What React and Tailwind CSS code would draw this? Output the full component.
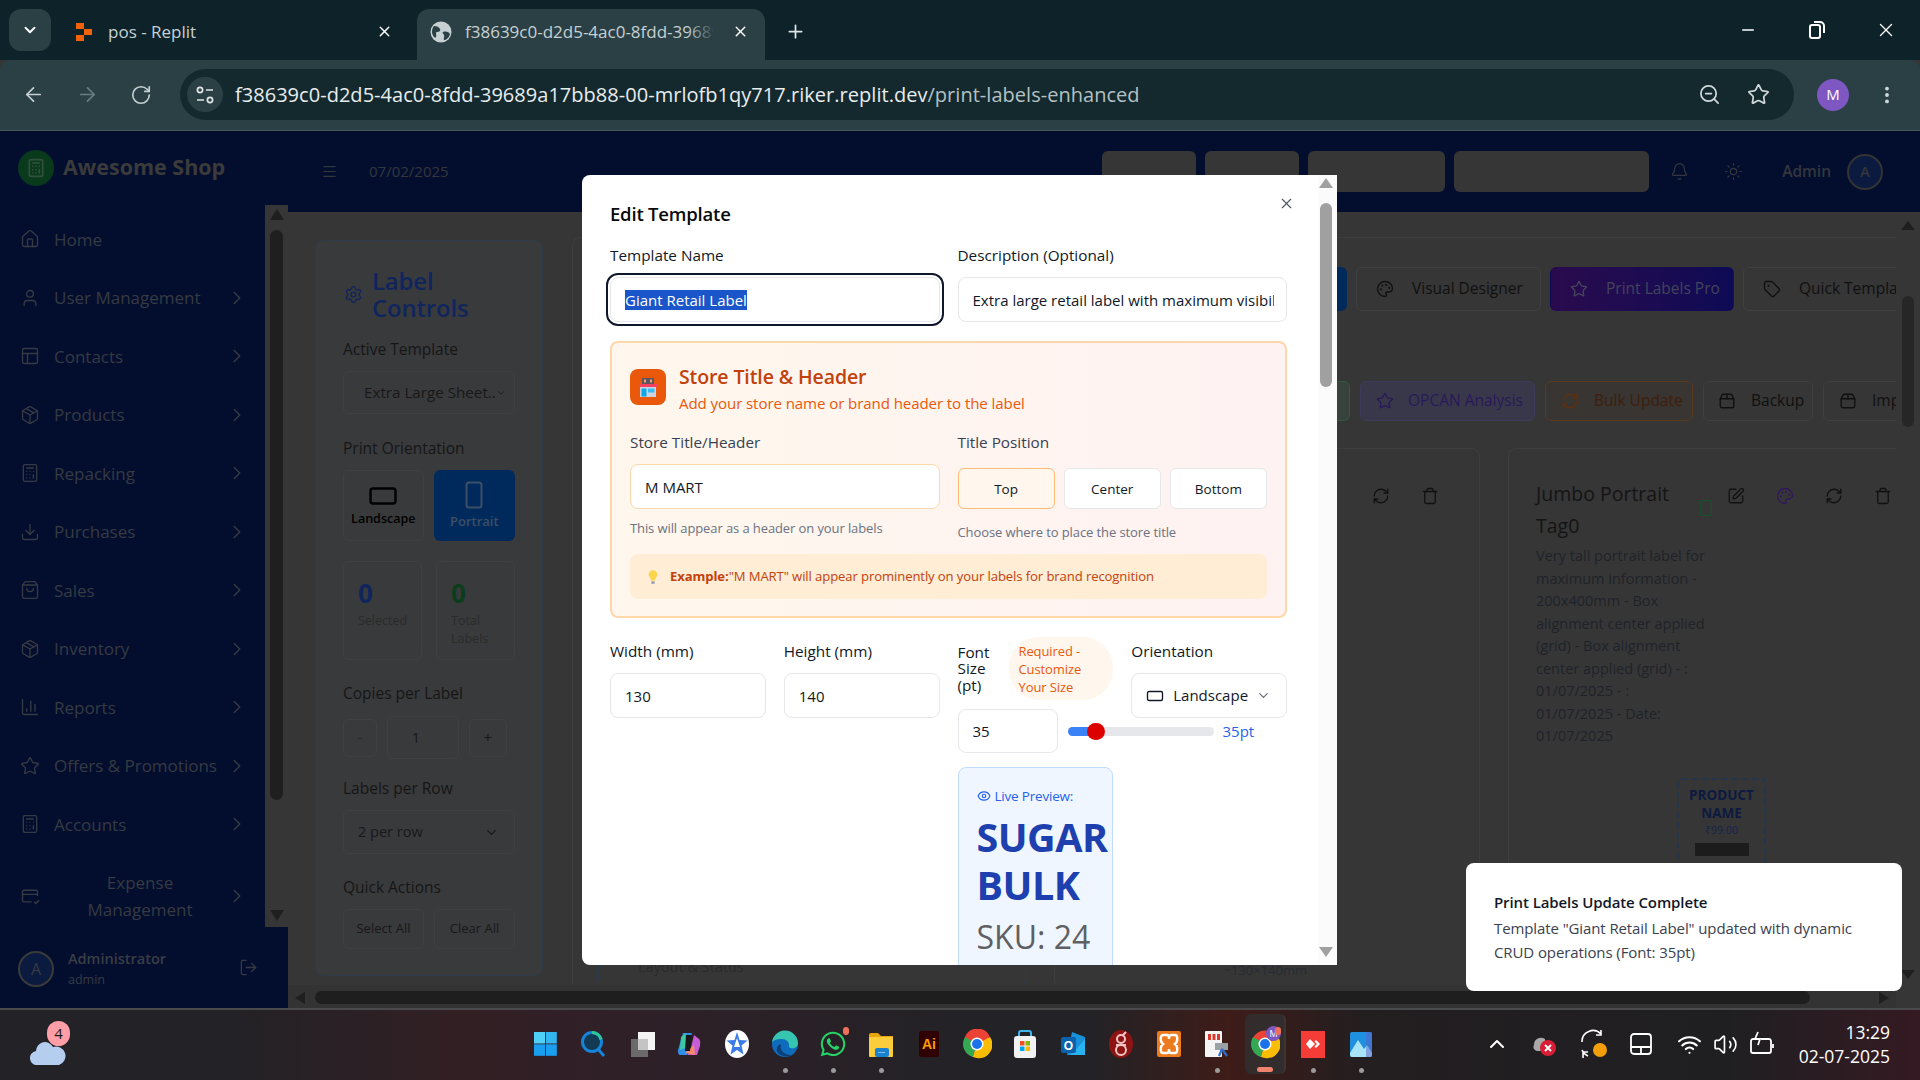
import React from 'react';
import {
  Home, User, PanelsTopLeft, Package, Calculator, Download, ShoppingBag, BarChart3, Star, ChevronRight, ChevronDown,
  LogOut, Settings, RectangleHorizontal, RectangleVertical, Palette, Tag, RefreshCw, Package2, Trash, SquarePen, Smartphone, Eye,
  Bell, Sun, Menu, X, Plus, ArrowLeft, ArrowRight, RotateCw, EllipsisVertical, ZoomOut, Minus, ChevronUp, Wifi, Volume2
} from 'lucide-react';
import { FaWhatsapp } from 'react-icons/fa';

function TabStrip() {
  return (
    <div className="h-[60px] bg-[#0d2329] flex items-end shrink-0 text-[#c6d0d2]">
      <div className="w-[42px] h-[42px] ml-[9px] mb-[9px] rounded-[12px] bg-[#2a4045] flex items-center justify-center">
        <ChevronDown size={18} strokeWidth={2.5} className="text-white" />
      </div>
      <div className="w-[366px] h-[51px] flex items-center pl-[25px] pr-[24px] pb-[6px]">
        <svg width="17" height="18" viewBox="0 0 17 18"><rect x="0" y="0" width="8" height="6" fill="#f26207" /><rect x="8" y="6" width="8" height="6" fill="#f26207" /><rect x="0" y="12" width="8" height="6" fill="#f26207" /></svg>
        <span className="ml-[15px] text-[17px]">pos - Replit</span>
        <X size={17} className="ml-auto text-white" />
      </div>
      <div className="w-[348px] h-[51px] bg-[#2a4045] rounded-t-[12px] flex items-center pl-[13px] pr-[16px] pb-[6px] relative">
        <svg width="22" height="22" viewBox="0 0 22 22" className="shrink-0"><circle cx="11" cy="11" r="10.5" fill="#c6d0d2" /><path d="M4 5c3 0 5 1 6 3s-1 3-3 3 0 3-1 5-4-2-4-5 1-5 2-6zM13 11c3-1 6 0 7 2-1 4-4 6-6 6-1-2 1-3 0-5s-2-2-1-3z" fill="#2a4045" /></svg>
        <span className="ml-[13px] text-[17px] w-[248px] overflow-hidden whitespace-nowrap">f38639c0-d2d5-4ac0-8fdd-39689a17bb88-00</span>
        <div className="absolute left-[270px] top-0 w-[28px] h-[45px] bg-gradient-to-r from-transparent to-[#2a4045]" />
        <X size={17} className="ml-auto text-white shrink-0 relative" />
      </div>
      <div className="w-[60px] h-[51px] flex items-center justify-center pb-[6px]"><Plus size={21} className="text-[#dfe5e6]" /></div>
      <div className="flex-1 h-full flex items-center justify-end text-white">
        <div className="w-[69px] flex justify-center"><Minus size={18} strokeWidth={2} /></div>
        <div className="w-[69px] flex justify-center">
          <svg width="16" height="18" viewBox="0 0 16 18" fill="none" stroke="white" strokeWidth="2"><rect x="1" y="4" width="10" height="13" rx="2" /><path d="M5 1h6a4 4 0 0 1 4 4v7" /></svg>
        </div>
        <div className="w-[69px] mr-0 flex justify-center"><X size={22} strokeWidth={1.5} /></div>
      </div>
    </div>
  );
}

function Toolbar() {
  return (
    <div className="h-[71px] bg-[#2a4045] rounded-t-[10px] border-b border-[#46595d] flex items-center shrink-0 text-[#c6d0d2] pb-[1px]">
      <div className="w-[54px] ml-[6px] flex justify-center"><ArrowLeft size={23} strokeWidth={1.8} /></div>
      <div className="w-[54px] flex justify-center text-[#6b7c80]"><ArrowRight size={23} strokeWidth={1.8} /></div>
      <div className="w-[54px] flex justify-center"><RotateCw size={22} strokeWidth={1.8} /></div>
      <div className="ml-[12px] w-[1614px] h-[51px] rounded-full bg-[#13292e] flex items-center pl-[7px] pr-[24px]">
        <div className="w-[36px] h-[35px] rounded-full bg-[#2a4045] flex items-center justify-center">
          <svg width="20" height="20" viewBox="0 0 20 20" fill="none" stroke="#dfe5e6" strokeWidth="1.7"><circle cx="5" cy="5" r="2.6" /><path d="M11 5h7M2 15h7" /><circle cx="15" cy="15" r="2.6" /></svg>
        </div>
        <span className="ml-[12px] text-[20px] tracking-[0.03px] text-[#e8eced] whitespace-nowrap">f38639c0-d2d5-4ac0-8fdd-39689a17bb88-00-mrlofb1qy717.riker.replit.dev<span className="text-[#b4c0c3]">/print-labels-enhanced</span></span>
        <ZoomOut size={23} strokeWidth={1.8} className="ml-auto text-[#d0d8da]" />
        <Star size={23} strokeWidth={1.8} className="ml-[26px] text-[#d0d8da]" />
      </div>
      <div className="ml-[23px] w-[32px] h-[32px] rounded-full bg-[#7e57c2] text-white text-[15px] flex items-center justify-center">M</div>
      <div className="ml-[27px] flex"><EllipsisVertical size={22} strokeWidth={2.2} className="text-[#d0d8da]" /></div>
    </div>
  );
}

const navItems = [
  [Home, 'Home', false],
  [User, 'User Management', true],
  [PanelsTopLeft, 'Contacts', true],
  [Package, 'Products', true],
  [Calculator, 'Repacking', true],
  [Download, 'Purchases', true],
  [ShoppingBag, 'Sales', true],
  [Package, 'Inventory', true],
  [BarChart3, 'Reports', true],
  [Star, 'Offers & Promotions', true],
  [Calculator, 'Accounts', true],
];

function Sidebar() {
  return (
    <aside className="w-[288px] h-full bg-[#030e2e] flex flex-col shrink-0 text-[#363a42]">
      <div className="h-[74px] flex items-center pl-[18px] pb-[1px] shrink-0">
        <div className="w-[36px] h-[36px] rounded-full bg-[#0a3a1c] flex items-center justify-center">
          <Calculator size={20} className="text-[#33503f]" />
        </div>
        <span className="ml-[9px] text-[21.5px] font-bold text-[#3b3b3b] whitespace-nowrap">Awesome Shop</span>
      </div>
      <div className="flex-1 flex min-h-0">
        <nav className="w-[265px] pt-[5px] overflow-hidden">
          {navItems.map(([Icon, label, chev]) => (
            <div key={label} className="h-[58.5px] flex items-center pl-[20px] pr-[17px]">
              <Icon size={20} strokeWidth={1.6} className="shrink-0" />
              <span className="ml-[14px] text-[17px] whitespace-nowrap">{label}</span>
              {chev && <ChevronRight size={22} strokeWidth={1.6} className="ml-auto shrink-0" />}
            </div>
          ))}
          <div className="h-[84px] flex items-center pl-[20px] pr-[17px]">
            <svg width="20" height="20" viewBox="0 0 24 24" fill="none" stroke="currentColor" strokeWidth="1.7" className="shrink-0"><path d="M21 12V7a2 2 0 0 0-2-2H5a2 2 0 0 0-2 2v10a2 2 0 0 0 2 2h9M3 10h18M17 19l2 2 4-4" /></svg>
            <span className="ml-[14px] flex-1 text-center text-[17px] leading-[27px]">Expense<br />Management</span>
            <ChevronRight size={22} strokeWidth={1.6} className="shrink-0" />
          </div>
        </nav>
        <div className="w-[23px] bg-[#363636] flex flex-col items-center shrink-0">
          <div className="mt-[4px] w-0 h-0 border-x-[7px] border-x-transparent border-b-[11px] border-b-[#1f1f1f]" />
          <div className="w-[13px] h-[570px] mt-[10px] rounded-full bg-[#1f1f1f]" />
          <div className="w-0 h-0 mt-auto mb-[6px] border-x-[7px] border-x-transparent border-t-[11px] border-t-[#1f1f1f]" />
        </div>
      </div>
      <div className="h-[81px] flex items-center pl-[18px] shrink-0">
        <div className="w-[36px] h-[36px] mt-[2px] rounded-full border-2 border-[#3a3a3a] bg-[#0a1b3f] flex items-center justify-center text-[16px]">A</div>
        <div className="ml-[14px] mt-[3px]">
          <div className="text-[14.5px] font-semibold text-[#3a3d44] leading-[20px]">Administrator</div>
          <div className="text-[12.5px] leading-[20px] mt-[1px]">admin</div>
        </div>
        <LogOut size={19} strokeWidth={1.6} className="ml-auto mr-[30px]" />
      </div>
    </aside>
  );
}

function Header() {
  return (
    <header className="h-[81px] bg-[#030e2e] flex items-center shrink-0 text-[#33363d]">
      <Menu size={17} strokeWidth={1.7} className="ml-[33px]" />
      <span className="ml-[31px] text-[15px]">07/02/2025</span>
      <div className="ml-auto flex items-center gap-[9px]">
        <div className="w-[94px] h-[41px] rounded-md bg-[#363636]" />
        <div className="w-[94px] h-[41px] rounded-md bg-[#363636]" />
        <div className="w-[137px] h-[41px] rounded-md bg-[#363636]" />
        <div className="w-[195px] h-[41px] rounded-md bg-[#363636]" />
      </div>
      <Bell size={19} strokeWidth={1.5} className="ml-[21px]" />
      <Sun size={19} strokeWidth={1.5} className="ml-[35px]" />
      <span className="ml-[39px] text-[15.5px] font-semibold">Admin</span>
      <div className="ml-[16px] mr-[37px] w-[36px] h-[36px] rounded-full border-2 border-[#333] bg-[#0a1b3f] flex items-center justify-center text-[15px] font-semibold">A</div>
    </header>
  );
}

function Outline({ className, children }) {
  return <div className={`border border-[#404040] rounded-md flex items-center justify-center ${className}`}>{children}</div>;
}

function LabelControls() {
  const head = 'text-[15.5px] font-medium leading-[20px] text-[#161616]';
  return (
    <div className="w-[228px] h-[736px] shrink-0 rounded-lg border border-[#2f3b4a] bg-[#393a3c] pl-[27px] pr-[27px] text-[#181818]">
      <div className="flex items-center mt-[26px]">
        <Settings size={19} strokeWidth={1.7} className="text-[#10255c] shrink-0 ml-[1px]" />
        <div className="ml-[9px] text-[24px] font-semibold leading-[27px] text-[#10255c] tracking-[-0.2px]">Label<br />Controls</div>
      </div>
      <div className={`mt-[18px] ${head}`}>Active Template</div>
      <Outline className="mt-[12px] h-[43px] w-[172px] justify-start pl-[20px] pr-[14px]">
        <span className="text-[15.2px] whitespace-nowrap">Extra Large Sheet..</span>
        <ChevronDown size={10} className="ml-auto shrink-0" />
      </Outline>
      <div className={`mt-[24px] ${head}`}>Print Orientation</div>
      <div className="mt-[12px] flex gap-[10px]">
        <Outline className="w-[81px] h-[71px] flex-col">
          <RectangleHorizontal size={30} strokeWidth={1.9} className="text-black" />
          <span className="text-[12.5px] font-semibold text-black -mt-[1px] mb-[2px]">Landscape</span>
        </Outline>
        <div className="w-[82px] h-[71px] rounded-md bg-[#002a5c] flex flex-col items-center justify-center text-[#3d4f66]">
          <RectangleVertical size={30} strokeWidth={1.6} />
          <span className="text-[13px] font-semibold mt-[2px]">Portrait</span>
        </div>
      </div>
      <div className="mt-[20px] flex gap-[14px]">
        <Outline className="w-[79px] h-[99px] flex-col !items-start !justify-start pl-[14px] pt-[15px]">
          <div className="text-[26px] font-bold leading-[32px] text-[#10255c]">0</div>
          <div className="text-[12.5px] leading-[18px] text-[#2a2a2a] mt-[3px]">Selected</div>
        </Outline>
        <Outline className="w-[79px] h-[99px] flex-col !items-start !justify-start pl-[14px] pt-[15px]">
          <div className="text-[26px] font-bold leading-[32px] text-[#0c3d1a]">0</div>
          <div className="text-[12.5px] leading-[18px] text-[#2a2a2a] mt-[3px]">Total<br />Labels</div>
        </Outline>
      </div>
      <div className={`mt-[23px] ${head}`}>Copies per Label</div>
      <div className="mt-[13px] flex items-center gap-[10px]">
        <Outline className="w-[34px] h-[38px] text-[14px] text-[#2a2a2a]">-</Outline>
        <Outline className="w-[72px] h-[43px] text-[14.5px] pr-[14px]">1</Outline>
        <Outline className="w-[38px] h-[38px] text-[14.5px]">+</Outline>
      </div>
      <div className={`mt-[19px] ${head}`}>Labels per Row</div>
      <Outline className="mt-[12px] h-[44px] w-[172px] justify-start pl-[14px] pr-[15px]">
        <span className="text-[14.5px]">2 per row</span>
        <ChevronDown size={15} className="ml-auto" />
      </Outline>
      <div className={`mt-[23px] ${head}`}>Quick Actions</div>
      <div className="mt-[12px] flex gap-[10px]">
        <Outline className="w-[81px] h-[40px] text-[13px] font-medium">Select All</Outline>
        <Outline className="w-[81px] h-[40px] text-[13px] font-medium">Clear All</Outline>
      </div>
    </div>
  );
}

function Tool({ icon: Icon, className = '', w, text, tc = 'text-[#101010]', ic = 'text-[#101010]', gap = 'ml-[18px]', pl = 'pl-[19px]' }) {
  return (
    <div className={`flex items-center shrink-0 border rounded-md whitespace-nowrap overflow-hidden ${w} ${pl} ${className}`}>
      <Icon size={18} strokeWidth={1.8} className={`shrink-0 ${ic}`} />
      <span className={`${gap} text-[15.5px] font-medium ${tc}`}>{text}</span>
    </div>
  );
}

function MainContent() {
  return (
    <div className="flex-1 min-h-0 flex bg-[#363636]">
      <div className="flex-1 min-w-0 overflow-hidden flex flex-col">
        <div className="flex-1 min-h-0 overflow-hidden flex pt-[28px] pl-[27px]">
          <LabelControls />
          <div className="ml-[29px] mt-[-3px] flex-1 min-w-0 border-l border-t border-[#3e3e3e] rounded-tl-lg pl-[25px] pt-[29px] overflow-hidden">
            <div className="flex gap-[9px] h-[44px] overflow-hidden">
              <div className="w-[749px] shrink-0 bg-[#002a5c] rounded-md" />
              <Tool icon={Palette} w="w-[185px]" className="border-[#404040]" text="Visual Designer" />
              <Tool icon={Star} w="w-[184px]" pl="pl-[19px]" className="border-transparent bg-gradient-to-r from-[#2a0a4e] to-[#0d0a55]" text="Print Labels Pro" tc="text-[#43435a]" ic="text-[#45455a]" />
              <Tool icon={Tag} w="w-[220px]" className="border-[#404040]" text="Quick Templates" />
            </div>
            <div className="flex gap-[10px] h-[40px] mt-[70px] overflow-hidden">
              <div className="w-[752px] shrink-0 border border-[#2f5a3c] bg-[#38423c] rounded-md" />
              <Tool icon={Star} w="w-[175px]" pl="pl-[15px]" gap="ml-[14px]" className="border-[#3e3a5c] bg-[#39384a]" text="OPCAN Analysis" tc="text-[#28185a]" ic="text-[#28185a]" />
              <Tool icon={RefreshCw} w="w-[148px]" pl="pl-[15px]" gap="ml-[15px]" className="border-[#5a3a1c] bg-[#383532]" text="Bulk Update" tc="text-[#3f1f0c]" ic="text-[#5f2f10]" />
              <Tool icon={Package2} w="w-[110px]" pl="pl-[14px]" gap="ml-[15px]" className="border-[#404040]" text="Backup" />
              <Tool icon={Package2} w="w-[130px]" pl="pl-[15px]" gap="ml-[15px]" className="border-[#404040]" text="Import" />
            </div>
            <div className="flex gap-[28px] mt-[27px]">
              <div className="w-[428px] h-[540px] shrink-0 border border-[#2b3a4d] rounded-lg flex flex-col justify-end pl-[39px] pb-[9px] text-[#2b2b2b]">
                <div className="text-[14.5px]">Layout &amp; Status</div>
              </div>
              <div className="w-[426px] h-[540px] shrink-0 border border-[#3e3e3e] rounded-lg relative">
                <div className="flex justify-end gap-[31px] pr-[40px] pt-[38px] text-[#111]">
                  <RefreshCw size={18} strokeWidth={1.7} />
                  <Trash size={18} strokeWidth={1.7} />
                </div>
                <div className="absolute right-[172px] bottom-[7px] text-[13px] text-[#272b33]">~130×140mm</div>
              </div>
              <div className="w-[420px] h-[540px] shrink-0 border-l border-t border-[#3e3e3e] rounded-tl-lg pl-[27px] pr-[5px] pt-[29px]">
                <div className="flex">
                  <div className="w-[170px] text-[19.5px] font-medium leading-[32px] text-[#141414]">Jumbo Portrait Tag0</div>
                  <Smartphone size={18} strokeWidth={1.5} className="mt-[21px] text-[#14532d] ml-[-9px] shrink-0" />
                  <div className="flex gap-[31px] ml-[12px] pt-[9px] shrink-0">
                    <SquarePen size={18} strokeWidth={1.7} className="text-[#111]" />
                    <Palette size={18} strokeWidth={1.7} className="text-[#31175e]" />
                    <RefreshCw size={18} strokeWidth={1.7} className="text-[#111]" />
                    <Trash size={18} strokeWidth={1.7} className="text-[#111]" />
                  </div>
                </div>
                <div className="mt-[3px] text-[14.5px] leading-[22.5px] text-[#1f2329] whitespace-nowrap">
                  Very tall portrait label for<br />maximum information -<br />200x400mm - Box<br />alignment center applied<br />(grid) - Box alignment<br />center applied (grid) - :<br />01/07/2025 - :<br />01/07/2025 - Date:<br />01/07/2025
                </div>
                <div className="ml-[141px] mt-[30px] w-[89px] h-[100px] border-2 border-dashed border-[#24364f] rounded text-center pt-[6px]">
                  <div className="text-[13.5px] font-bold leading-[18px] text-[#0d1a40]">PRODUCT<br />NAME</div>
                  <div className="text-[10.5px] leading-[16px] text-[#14254d]">₹99.00</div>
                  <div className="mx-auto mt-[5px] w-[54px] h-[13px] bg-[#1c1c1c]" />
                </div>
              </div>
            </div>
          </div>
        </div>
        <div className="h-[23px] shrink-0 bg-[#333333] flex items-start pt-[6px]">
          <div className="ml-[7px] mt-[1px] w-0 h-0 border-y-[6px] border-y-transparent border-r-[10px] border-r-[#1f1f1f]" />
          <div className="ml-[10px] w-[1495px] h-[13px] rounded-full bg-[#1e1e1e]" />
          <div className="ml-[69px] mt-[1px] w-0 h-0 border-y-[6px] border-y-transparent border-l-[10px] border-l-[#1f1f1f]" />
        </div>
      </div>
      <div className="w-[24px] shrink-0 flex flex-col items-center">
        <div className="mt-[9px] w-0 h-0 border-x-[7px] border-x-transparent border-b-[9px] border-b-[#1f1f1f]" />
        <div className="mt-[66px] w-[12px] h-[131px] rounded-full bg-[#262626]" />
        <div className="mt-auto mb-[29px] w-0 h-0 border-x-[7px] border-x-transparent border-t-[9px] border-t-[#1f1f1f]" />
      </div>
    </div>
  );
}

const inputCls = 'w-full rounded-lg border border-[#e5e7eb] bg-white pl-[14px] pr-[12px] text-[15px] text-[#111827] outline-none';
const fieldLabel = 'text-[15.3px] font-medium leading-[20px] text-[#111827]';

function Modal() {
  return (
    <div className="absolute left-[582px] top-[175px] w-[755px] h-[790px] bg-white rounded-l-lg flex overflow-hidden font-['Open_Sans','Noto_Sans',sans-serif]">
      <div className="w-[736px] pl-[28px] pr-[31px] pt-[27px] overflow-hidden shrink-0 relative">
        <X size={17} strokeWidth={1.6} className="absolute left-[696px] top-[20px] text-[#4b5563]" />
        <h2 className="text-[18.5px] font-semibold leading-[24px] text-[#0a0a0a] tracking-[-0.2px]">Edit Template</h2>
        <div className="mt-[19px] grid grid-cols-2 gap-[18px]">
          <div>
            <div className={fieldLabel}>Template Name</div>
            <div className="mt-[12px] h-[45px] rounded-lg border border-[#e5e7eb] bg-white flex items-center pl-[14px] text-[15px] text-[#111827] outline-2 outline-offset-2 outline-[#0f172a]">
              <span className="bg-[#1a56c9] text-white leading-[20px]">Giant Retail Label</span>
            </div>
          </div>
          <div>
            <div className={fieldLabel}>Description (Optional)</div>
            <input readOnly value="Extra large retail label with maximum visibility" className={`mt-[12px] h-[45px] ${inputCls}`} />
          </div>
        </div>
        <section className="mt-[19px] h-[277px] rounded-lg border-2 border-[#fed7aa] bg-gradient-to-r from-[#fff7ed] to-[#fef2f2] pl-[18px] pr-[18px]">
          <div className="pt-[22px] flex items-start">
            <div className="w-[36px] h-[36px] mt-[4px] rounded-lg bg-[#ea580c] flex items-center justify-center shrink-0">
              <svg width="22" height="22" viewBox="0 0 22 22"><rect x="5" y="2" width="12" height="6" fill="#5b5560" /><rect x="7" y="3.5" width="2" height="3" fill="#f3a07a" /><rect x="13" y="3.5" width="2" height="3" fill="#f3a07a" /><rect x="2" y="8" width="18" height="3" fill="#f43f5e" /><rect x="3" y="11" width="16" height="10" fill="#cbd5e1" /><rect x="4.5" y="12.5" width="5" height="8" fill="#0ea5e9" /><rect x="11" y="12.5" width="6.5" height="4" fill="#38bdf8" /></svg>
            </div>
            <div className="ml-[13px]">
              <div className="text-[19.5px] font-semibold leading-[24px] text-[#c2410c] tracking-[-0.1px]">Store Title &amp; Header</div>
              <div className="mt-[4px] text-[15.1px] leading-[20px] text-[#ea580c] tracking-[-0.1px]">Add your store name or brand header to the label</div>
            </div>
          </div>
          <div className="mt-[19px] grid grid-cols-2 gap-[18px]">
            <div>
              <div className="text-[15.3px] font-medium leading-[20px] text-[#374151]">Store Title/Header</div>
              <input readOnly value="M MART" className="mt-[12px] h-[45px] w-full rounded-lg border border-[#fed7aa] bg-white pl-[14px] text-[15px] text-[#111827] outline-none" />
              <div className="mt-[11px] text-[13px] leading-[16px] text-[#6b7280] tracking-[-0.1px]">This will appear as a header on your labels</div>
            </div>
            <div>
              <div className="text-[15.3px] font-medium leading-[20px] text-[#374151]">Title Position</div>
              <div className="mt-[16px] grid grid-cols-3 gap-[9px]">
                <div className="h-[41px] rounded-md border border-[#fdba74] bg-[#fff7ed] flex items-center justify-center pt-[2px] text-[13.5px] font-medium text-[#111827]">Top</div>
                <div className="h-[41px] rounded-md border border-[#e5e7eb] bg-white flex items-center justify-center pt-[2px] text-[13.5px] font-medium text-[#111827]">Center</div>
                <div className="h-[41px] rounded-md border border-[#e5e7eb] bg-white flex items-center justify-center pt-[2px] text-[13.5px] font-medium text-[#111827]">Bottom</div>
              </div>
              <div className="mt-[15px] text-[13px] leading-[16px] text-[#6b7280] tracking-[-0.1px]">Choose where to place the store title</div>
            </div>
          </div>
          <div className="mt-[14px] h-[45px] rounded-lg bg-[#ffedd5] flex items-center pl-[17px] pt-[1px]">
            <svg width="12" height="16" viewBox="0 0 14 18"><path d="M7 1a5 5 0 0 1 3 9l-.6 3H4.6L4 10a5 5 0 0 1 3-9z" fill="#fcd34d" /><rect x="5" y="14" width="4" height="3" fill="#9ca3af" /></svg>
            <span className="ml-[11px] text-[13.1px] text-[#c2410c] tracking-[-0.1px]"><b className="font-bold">Example:</b>"M MART" will appear prominently on your labels for brand recognition</span>
          </div>
        </section>
        <div className="mt-[19px] grid grid-cols-4 gap-[18px] items-start">
          <div className="pt-[4px]">
            <div className={fieldLabel}>Width (mm)</div>
            <input readOnly value="130" className={`mt-[12px] h-[45px] ${inputCls}`} />
          </div>
          <div className="pt-[4px]">
            <div className={fieldLabel}>Height (mm)</div>
            <input readOnly value="140" className={`mt-[12px] h-[45px] ${inputCls}`} />
          </div>
          <div>
            <div className="flex items-center h-[63px]">
              <div className="w-[51px] text-[15.3px] font-medium leading-[16.5px] text-[#111827]">Font Size (pt)</div>
              <div className="w-[104px] h-[63px] shrink-0 rounded-[30px] bg-[#fff7ed] pl-[10px] text-[13px] leading-[18px] text-[#ea580c] flex items-center tracking-[-0.1px]"><span>Required -<br />Customize<br />Your Size</span></div>
            </div>
            <div className="mt-[9px] flex items-center w-[329px]">
              <input readOnly value="35" className="h-[44px] w-[100px] rounded-lg border border-[#e5e7eb] bg-white pl-[14px] text-[15px] text-[#111827] outline-none" />
              <div className="ml-[10px] w-[146px] h-[9px] rounded-full bg-[#e5e7eb] relative">
                <div className="h-full w-[24px] rounded-l-full bg-[#3b82f6]" />
                <div className="absolute left-[19px] top-[-4px] w-[18px] h-[17px] rounded-full bg-[#dc0000]" />
              </div>
              <span className="ml-[9px] text-[15px] font-medium text-[#2563eb]">35pt</span>
            </div>
            <div className="mt-[14px] w-[155px] h-[300px] rounded-lg border border-[#bfdbfe] bg-[#eff6ff] pl-[18px] pt-[19px]">
              <div className="flex items-center text-[#2563eb]">
                <Eye size={14} strokeWidth={2} />
                <span className="ml-[4px] text-[13.5px] font-medium leading-[18px] tracking-[-0.2px]">Live Preview:</span>
              </div>
              <div className="mt-[8px] text-[39.5px] font-bold leading-[48px] text-[#1e40af] tracking-[-0.5px]">SUGAR BULK</div>
              <div className="mt-[5px] text-[32px] leading-[46px] text-[#5f6063] whitespace-nowrap">SKU: 24</div>
            </div>
          </div>
          <div className="pt-[4px]">
            <div className={fieldLabel}>Orientation</div>
            <div className="mt-[12px] h-[45px] rounded-lg border border-[#e5e7eb] bg-white flex items-center pl-[14px] pr-[15px] text-[15px] text-[#111827]">
              <RectangleHorizontal size={18} strokeWidth={1.8} />
              <span className="ml-[9px]">Landscape</span>
              <ChevronDown size={15} className="ml-auto text-[#6b7280]" />
            </div>
          </div>
        </div>
      </div>
      <div className="flex-1 bg-[#fbfbfb] flex flex-col items-center pr-[4px]">
        <div className="mt-[3px] w-0 h-0 border-x-[7px] border-x-transparent border-b-[10px] border-b-[#a0a0a0]" />
        <div className="mt-[15px] w-[12px] h-[184px] rounded-full bg-[#a0a0a0]" />
        <div className="mt-auto mb-[8px] w-0 h-0 border-x-[7px] border-x-transparent border-t-[10px] border-t-[#a0a0a0]" />
      </div>
    </div>
  );
}

function Toast() {
  return (
    <div className="absolute left-[1466px] top-[863px] w-[436px] h-[128px] bg-white rounded-lg pl-[28px] pr-[20px] pt-[28px] font-['Open_Sans','Noto_Sans',sans-serif]">
      <div className="text-[15px] font-semibold leading-[22px] text-[#111827] tracking-[-0.1px]">Print Labels Update Complete</div>
      <div className="mt-[4px] text-[15px] leading-[23.5px] text-[#3a4150] tracking-[-0.1px]">Template "Giant Retail Label" updated with dynamic CRUD operations (Font: 35pt)</div>
    </div>
  );
}

const Ic = ({ children, w = 30, h = 30 }) => <svg width={w} height={h} viewBox="0 0 30 30">{children}</svg>;

const taskIcons = [
  { dot: false, el: <Ic><rect x="4" y="3" width="11" height="11.5" fill="#4fd0f7" /><rect x="15.8" y="3" width="11" height="11.5" fill="#35b5f0" /><rect x="4" y="15.3" width="11" height="11.5" fill="#1a9ef0" /><rect x="15.8" y="15.3" width="11" height="11.5" fill="#1a9ef0" /></Ic> },
  { el: <Ic><circle cx="14" cy="13" r="9.5" fill="#133a55" stroke="#1585d8" strokeWidth="3" /><path d="M14 3.5a9.5 9.5 0 0 1 9 7" stroke="#2fc79a" strokeWidth="3" fill="none" /><path d="M20 20l6 7" stroke="#1585d8" strokeWidth="3" /></Ic> },
  { el: <Ic><rect x="12" y="3" width="17" height="18" fill="#f4f4f4" /><rect x="5" y="10" width="17" height="18" fill="#6a6a6a" /><rect x="12" y="10" width="10" height="11" fill="#c4c4c4" /></Ic> },
  { el: <Ic><path d="M9 4h9l-5 22H6c-2 0-2-3-2-5z" fill="#2f8fe8" /><path d="M7 8l5-4 2 14-8 3z" fill="#3cc6a4" /><path d="M20 6l5 4c2 2 1 5 1 7l-3 9h-10l3-3z" fill="#c85cd6" /><path d="M11 24l9-8 1 10z" fill="#f5896a" /><path d="M12 6h6l-2 16h-5z" fill="#18181b" /></Ic> },
  { el: <Ic><ellipse cx="15" cy="15" rx="12" ry="14" fill="#fff" /><path d="M15 3l2.5 8 8 .5-6 5 2 9L15 21l-6.5 4.5 2-9-6-5 8-.5z" fill="#3b7be8" /><path d="M15 9l3 9h-6z" fill="#fff" /></Ic> },
  { dot: true, el: <Ic><circle cx="15" cy="15" r="13" fill="#0f6cbd" /><path d="M2 15a13 13 0 0 1 26-1c0 5-6 7-9 4 1-5-3-8-7-8-5 0-10 1-10 5z" fill="#36c5b0" /><path d="M11 15c-2 7 4 11 10 11-4 3-12 1-14-4-1-3 1-6 4-7z" fill="#0b3f78" /></Ic> },
  { el: <FaWhatsapp size={28} className="text-[#25d366]" />, dot: true, badge: true },
  { el: <Ic><path d="M3 6a2 2 0 0 1 2-2h7l3 3h12v6H3z" fill="#e8a60a" /><rect x="3" y="8" width="24" height="20" rx="1" fill="#fbcd3c" /><rect x="9" y="19" width="14" height="9" rx="2" fill="#1a80cf" /><rect x="12" y="23" width="7" height="1" fill="#7fc3ee" /></Ic>, dot: true },
  { el: <div className="w-[20px] h-[26px] rounded-[3px] bg-[#300000] text-[#ff9a00] text-[14px] font-bold flex items-center justify-center font-['Liberation_Sans',sans-serif]">Ai</div> },
  { el: <Ic><circle cx="15" cy="15" r="13.5" fill="#ea4335" /><path d="M15 15L3 8a13.5 13.5 0 0 0 8 20z" fill="#34a853" /><path d="M15 15L28 8a13.5 13.5 0 0 1-13 21l-4-1z" fill="#fbbc04" /><path d="M3 8a13.5 13.5 0 0 1 25 0H15z" fill="#ea4335" /><circle cx="15" cy="15" r="6.5" fill="#fff" /><circle cx="15" cy="15" r="5" fill="#1a73e8" /></Ic> },
  { el: <Ic><path d="M9 8V4a2 2 0 0 1 2-2h8a2 2 0 0 1 2 2v4" stroke="#3cb7f0" strokeWidth="2" fill="none" /><rect x="4" y="7" width="22" height="22" rx="3" fill="#f2f2f2" /><rect x="10" y="12" width="4.5" height="4.5" fill="#f25022" /><rect x="15.5" y="12" width="4.5" height="4.5" fill="#7fba00" /><rect x="10" y="17.5" width="4.5" height="4.5" fill="#00a4ef" /><rect x="15.5" y="17.5" width="4.5" height="4.5" fill="#ffb900" /></Ic> },
  { el: <Ic><path d="M14 3l13 5v18H9z" fill="#1a90d9" /><path d="M27 10v16H12l8-8z" fill="#27b4f0" /><rect x="3" y="8" width="15" height="16" rx="2" fill="#0a62ad" /><text x="10.5" y="20.5" textAnchor="middle" fontSize="12" fontWeight="700" fill="#fff" fontFamily="Liberation Sans, sans-serif">O</text></Ic> },
  { el: <Ic><ellipse cx="15" cy="15" rx="12" ry="14" fill="#8e1414" /><circle cx="15" cy="10" r="4" fill="none" stroke="#f2c6c6" strokeWidth="2" /><circle cx="15" cy="21" r="5" fill="none" stroke="#f2c6c6" strokeWidth="2" /><path d="M17 6l3-3M10 16l10 0" stroke="#f2c6c6" strokeWidth="2" /></Ic> },
  { el: <Ic><rect x="3" y="2" width="24" height="26" rx="2" fill="#ed7a1e" /><path d="M9 6h4c2 0 2 4 2 4s0-4 2-4h4c3 0 3 7 0 9 3 2 3 9 0 9h-4c-2 0-2-4-2-4s0 4-2 4H9c-3 0-3-7 0-9-3-2-3-9 0-9z" fill="none" stroke="#fff" strokeWidth="2.4" /></Ic> },
  { dot: true, el: <Ic><rect x="3" y="2" width="17" height="26" rx="1" fill="#f4f4f4" /><rect x="6" y="5" width="3" height="6" fill="#d83b2d" /><rect x="10.5" y="5" width="3" height="6" fill="#d83b2d" /><rect x="15" y="5" width="3" height="6" fill="#d83b2d" /><rect x="13" y="14" width="13" height="7" fill="#9aa0a6" /><path d="M20 20l-3 7M20 20l5 7" stroke="#2f6fd0" strokeWidth="2.2" /></Ic> },
  { active: true, badge: true, el: <div className="relative"><Ic><circle cx="15" cy="15" r="13.5" fill="#ea4335" /><path d="M15 15L3 8a13.5 13.5 0 0 0 8 20z" fill="#34a853" /><path d="M15 15L28 8a13.5 13.5 0 0 1-13 21l-4-1z" fill="#fbbc04" /><circle cx="15" cy="15" r="6.5" fill="#fff" /><circle cx="15" cy="15" r="5" fill="#1a73e8" /></Ic><div className="absolute right-[-1px] top-[-3px] w-[15px] h-[15px] rounded-full bg-[#7e57c2] text-white text-[9px] flex items-center justify-center">M</div></div> },
  { dot: true, el: <div className="w-[24px] h-[27px] bg-[#f63c36] flex items-center justify-center"><svg width="16" height="12" viewBox="0 0 16 12"><path d="M5 1l5 5-5 5-4-5zM11 2l4 4-4 4-1.5-1.5L12 6 9.5 3.5z" fill="#fff" /></svg></div> },
  { dot: true, el: <Ic><rect x="4" y="3" width="22" height="25" rx="2" fill="#1f8fe0" /><path d="M4 24l8-13 6 9 3-4 5 8v2a2 2 0 0 1-2 2H6a2 2 0 0 1-2-2z" fill="#a9e3f7" /><path d="M20 3h6v25h-6z" fill="#5b5fc7" opacity="0.5" /></Ic> },
];

function Taskbar() {
  return (
    <div className="h-[70px] shrink-0 flex items-center bg-[#232226] bg-[linear-gradient(90deg,#232226_12%,#321f24_24%,#2f2028_33%,#232226_50%,#232226_57%,#3e1c18_64%,#231e20_71%,#1f1f22_90%,#351a22_100%)] text-white">
      <div className="w-[521px] h-full flex items-center pl-[30px]">
        <div className="relative w-[40px] h-[36px] mt-[4px]">
          <svg width="36" height="24" viewBox="0 0 36 24" className="absolute left-0 bottom-0"><path d="M8 24a7 7 0 0 1-2-14 9 9 0 0 1 17-4 8 8 0 0 1 6 18z" fill="#b5cdef" /></svg>
          <div className="absolute left-[17px] top-[-8px] w-[23px] h-[25px] rounded-full bg-[#ff9ea6] text-[#1a1a1a] text-[15px] flex items-center justify-center">4</div>
        </div>
      </div>
      <div className="flex h-full">
        {taskIcons.map((t, i) => (
          <div key={i} className="w-[48px] h-full relative flex items-center justify-center pb-[2px]">
            {t.active && <div className="absolute left-[4px] top-[4px] w-[41px] h-[60px] rounded-md bg-[#322c2d] border-r-2 border-[#3b3636]" />}
            <div className="relative flex">{t.el}</div>
            {t.badge && <div className="absolute left-[34px] top-[17px] w-[6px] h-[8px] rounded-full bg-[#f0705c]" />}
            {t.dot && <div className="absolute left-[22px] top-[58px] w-[5px] h-[5px] rounded-full bg-[#9a9a9a]" />}
            {t.active && <div className="absolute left-[16px] top-[57px] w-[16px] h-[5px] rounded-full bg-[#f0836e]" />}
          </div>
        ))}
      </div>
      <div className="ml-[88px] flex items-center h-full pb-[2px]">
        <div className="w-[48px] flex justify-center"><ChevronUp size={24} /></div>
        <div className="w-[48px] flex justify-center">
          <svg width="28" height="26" viewBox="0 0 28 26"><path d="M3 14a7 7 0 0 1 11-6v12H6a4 4 0 0 1-3-6z" fill="#a8a8a8" /><circle cx="17" cy="17" r="8" fill="#d81e34" /><path d="M14 14l6 6M20 14l-6 6" stroke="#fff" strokeWidth="1.8" /></svg>
        </div>
        <div className="w-[48px] flex justify-center">
          <svg width="28" height="30" viewBox="0 0 28 30" fill="none" stroke="#fff" strokeWidth="1.6"><path d="M3 13a11 11 0 0 1 19-8M22 1v5h-5M3 21a11 11 0 0 0 6 6M4 29v-6h5" /><circle cx="21" cy="21" r="7" fill="#f59e0b" stroke="none" /></svg>
        </div>
        <div className="w-[48px] flex justify-center">
          <svg width="24" height="24" viewBox="0 0 24 24" fill="none" stroke="#fff" strokeWidth="1.8"><rect x="2" y="2" width="20" height="20" rx="3" /><path d="M2 15h20M12 15v7" /></svg>
        </div>
        <div className="w-[36px] ml-[6px] flex justify-center"><Wifi size={25} strokeWidth={2} /></div>
        <div className="w-[36px] flex justify-center"><Volume2 size={25} strokeWidth={1.6} /></div>
        <div className="w-[37px] flex justify-center">
          <svg width="26" height="26" viewBox="0 0 26 26" fill="none" stroke="#fff" strokeWidth="1.8"><path d="M7 8H4a2 2 0 0 0-2 2v10a2 2 0 0 0 2 2h16a2 2 0 0 0 2-2V10a2 2 0 0 0-2-2h-8" /><path d="M24 13v4" /><path d="M9 1L6 8h5l-2 6" /></svg>
        </div>
      </div>
      <div className="flex-1 text-right pr-[30px] text-[17.5px] leading-[24px] text-white mb-[3px]">
        <div>13:29</div>
        <div>02-07-2025</div>
      </div>
    </div>
  );
}

export default function App() {
  return (
    <div className="relative w-[1920px] h-[1080px] overflow-hidden flex flex-col font-['Open_Sans','Noto_Sans',sans-serif] bg-[#363636]">
      <TabStrip />
      <Toolbar />
      <div className="h-[877px] shrink-0 flex">
        <Sidebar />
        <div className="flex-1 min-w-0 flex flex-col">
          <Header />
          <MainContent />
        </div>
      </div>
      <div className="h-[2px] shrink-0 bg-[#4a4a4c]" />
      <Taskbar />
      <Modal />
      <Toast />
    </div>
  );
}
